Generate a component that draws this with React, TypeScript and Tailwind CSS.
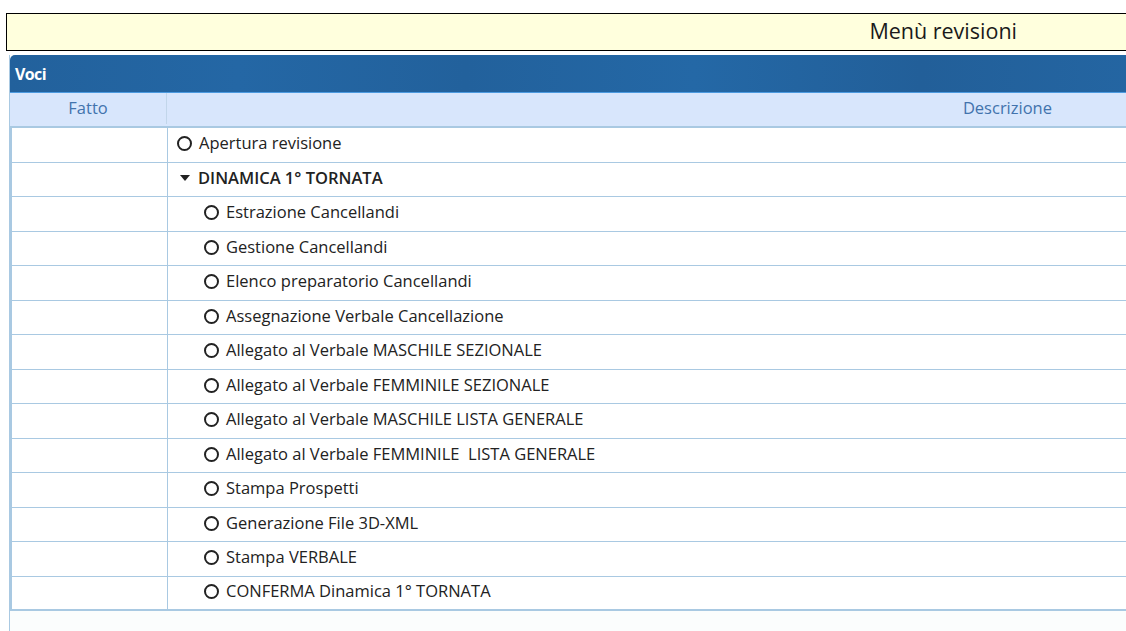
import React from 'react';

type Voce = { label: string; level: number; group?: boolean };

const VOCI: Voce[] = [
  { label: 'Apertura revisione', level: 0 },
  { label: 'DINAMICA 1° TORNATA', level: 0, group: true },
  { label: 'Estrazione Cancellandi', level: 1 },
  { label: 'Gestione Cancellandi', level: 1 },
  { label: 'Elenco preparatorio Cancellandi', level: 1 },
  { label: 'Assegnazione Verbale Cancellazione', level: 1 },
  { label: 'Allegato al Verbale MASCHILE SEZIONALE', level: 1 },
  { label: 'Allegato al Verbale FEMMINILE SEZIONALE', level: 1 },
  { label: 'Allegato al Verbale MASCHILE LISTA GENERALE', level: 1 },
  { label: 'Allegato al Verbale FEMMINILE  LISTA GENERALE', level: 1 },
  { label: 'Stampa Prospetti', level: 1 },
  { label: 'Generazione File 3D-XML', level: 1 },
  { label: 'Stampa VERBALE', level: 1 },
  { label: 'CONFERMA Dinamica 1° TORNATA', level: 1 },
];

const Row: React.FC<{ voce: Voce; last: boolean }> = ({ voce, last }) => (
  <div
    className={`flex h-[34.5px] bg-white ${last ? 'border-b-2' : 'border-b'} border-[#a9c9e2]`}
  >
    <div className="w-[156px] shrink-0 border-r border-[#a9c9e2]" />
    <div
      className={`flex items-center gap-[7px] ${voce.level === 0 ? 'pl-[9px]' : 'pl-[36px]'} pb-[2px] text-[16.5px] text-[#222]`}
    >
      {voce.group ? (
        <span className="flex w-[14px] shrink-0 justify-center pl-[1px]">
          <span className="h-0 w-0 border-l-[5px] border-r-[5px] border-t-[6px] border-l-transparent border-r-transparent border-t-[#222]" />
        </span>
      ) : (
        <span className="h-[15px] w-[15px] shrink-0 rounded-full border-2 border-[#222]" />
      )}
      <span className={`whitespace-pre ${voce.group ? 'font-semibold' : ''}`}>{voce.label}</span>
    </div>
  </div>
);

const App: React.FC = () => {
  return (
    <div
      className="h-[631px] w-full overflow-hidden bg-white"
      style={{ fontFamily: '"Open Sans", "Noto Sans", sans-serif' }}
    >
      <div className="pt-[13px] pl-[6px]">
        <div className="flex h-[38px] w-[1140px] items-center justify-end border border-black bg-[#ffffdd] pr-[128px] pb-[1px] text-[21.5px] font-medium text-[#1a1a1a]">
          Menù revisioni
        </div>
      </div>

      <div className="mt-[4px] ml-[9px] h-[600px] w-[1140px] border-l border-[#a9c9e2] bg-[#fbfdfd]">
        <div className="flex h-[38px] items-center rounded-tl-[5px] border-b border-[#4b9ae0] bg-[linear-gradient(90deg,#22619c_0%,#2467a5_20%,#22619c_40%,#2468a6_60%,#225f99_80%,#2466a3_100%)] pl-[5px] text-[16px] font-bold tracking-[-0.6px] text-white">
          Voci
        </div>
        <div className="flex h-[35px] border-b-2 border-[#a9c9e2] bg-[#d8e6fc] pb-[2px] text-[16.5px] text-[#4273ad]">
          <div className="flex w-[157px] shrink-0 items-center justify-center border-r border-[#c2d6ea]">
            Fatto
          </div>
          <div className="flex flex-1 items-center justify-end pr-[97px]">Descrizione</div>
        </div>
        <div className="border-l-2 border-[#a9c9e2]">
          {VOCI.map((v, i) => (
            <Row key={i} voce={v} last={i === VOCI.length - 1} />
          ))}
        </div>
      </div>
    </div>
  );
};

export default App;
